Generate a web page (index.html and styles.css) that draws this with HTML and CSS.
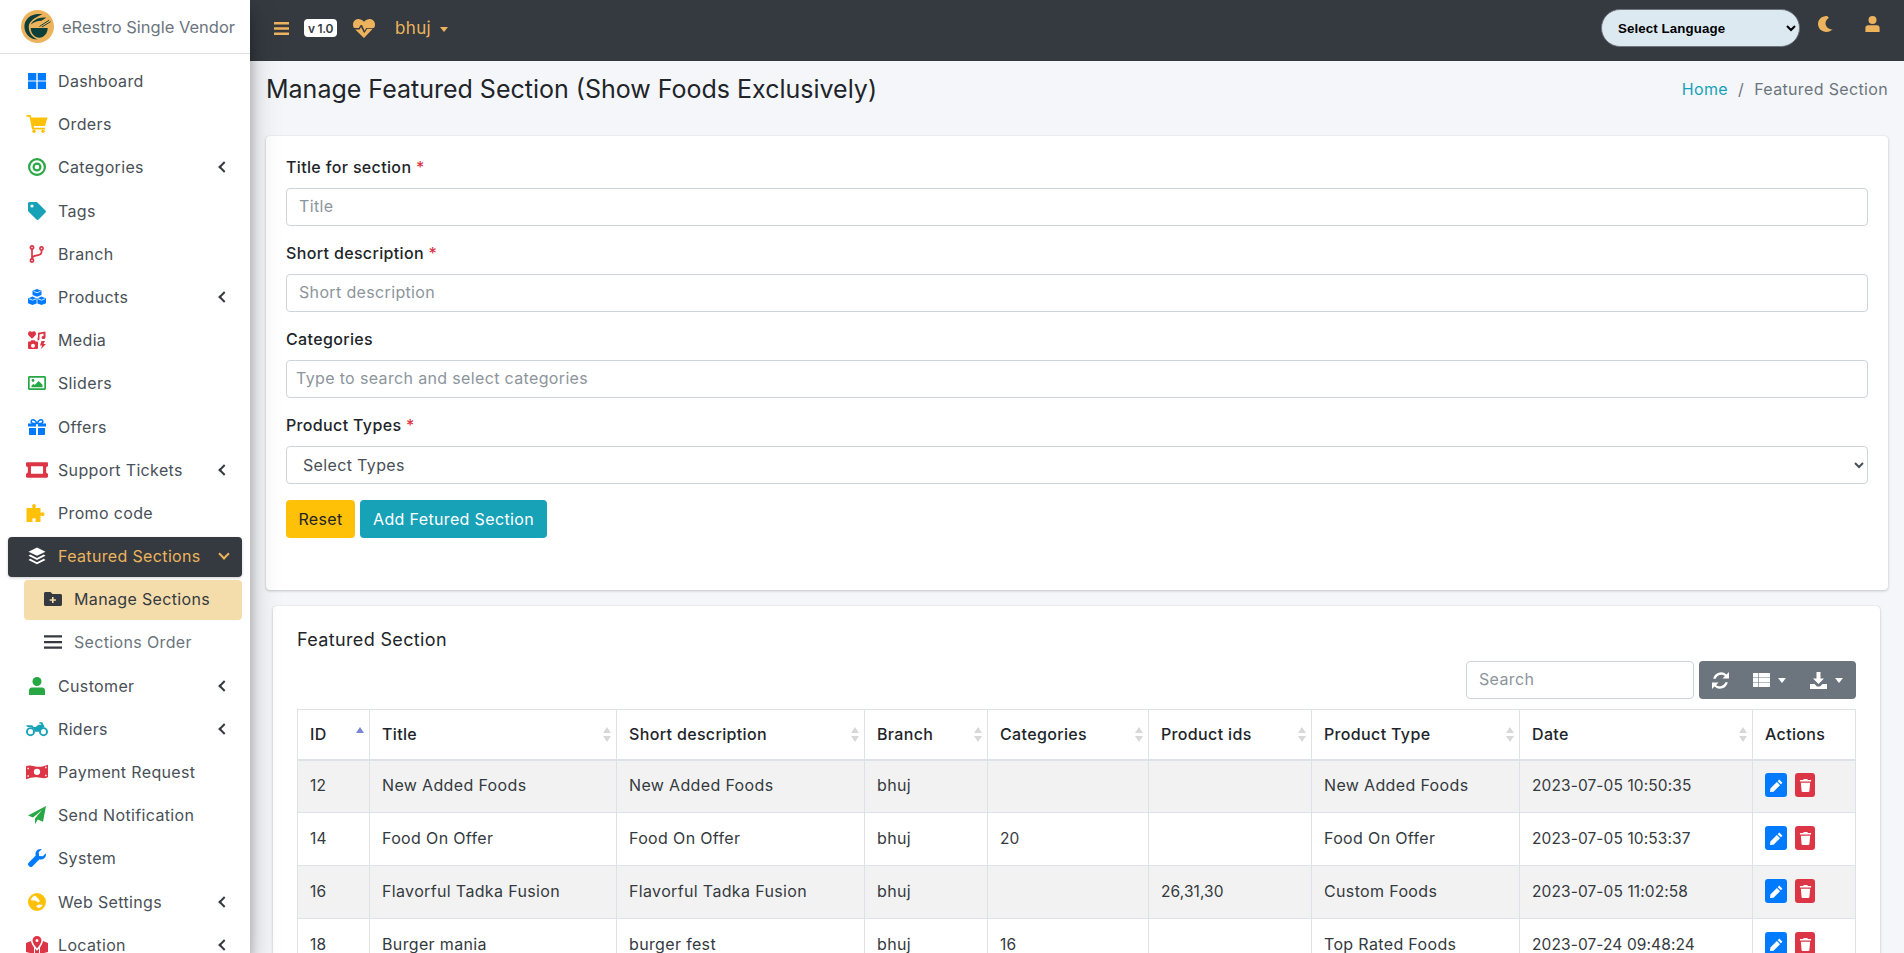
FILE: index.html
```html
<!DOCTYPE html>
<html>
<head>
  <meta charset="utf-8">
  <title>Manage Featured Section</title>
  <link rel="stylesheet" href="styles.css">
</head>
<body>
  <div class="wrapper">
    <aside class="sidebar">
      <div class="brand">
        <svg class="brand-logo" viewBox="0 0 34 34">
          <circle cx="17" cy="17" r="17" fill="#edb35c"/>
          <path d="M22 4.500C12 2.500 3.500 8.500 3.500 17c0 8 6.500 13.500 13.500 13.500C11.500 28 8 23 8 17.500 8 12 14 8 22 4.500z" fill="#0d3f3a"/>
          <path d="M10 18.500h17.500c0 5.500-4 10-8.700 10S10 24 10 18.500z" fill="#0d3f3a"/>
          <path d="M10 15c3-5 9-8 16-7l-5 3c-4 0-8 1.500-11 4z" fill="#0d3f3a"/>
          <path d="M19 17l10-6.500M21.500 17.500l9-5.500" stroke="#0d3f3a" stroke-width="1" fill="none"/>
        </svg>
        <span class="brand-text">eRestro Single Vendor</span>
      </div>
      <nav class="menu">
        <a class="item"><svg class="ico c-blue" viewBox="0 0 18 16"><path d="M0 0h8.300v7.400H0zM9.700 0H18v7.400H9.700zM0 8.600h8.300V16H0zM9.700 8.600H18V16H9.700z"/></svg><span>Dashboard</span></a>
        <a class="item"><svg class="ico wide c-yellow" viewBox="0 0 21 18"><path d="M0 0h4.200l.6 2.500H21l-2.500 8.500H7.200l.4 1.800h10.900v1.700H5.600L3 1.800H0z"/><circle cx="7.500" cy="16.300" r="1.700"/><circle cx="16.500" cy="16.300" r="1.700"/></svg><span>Orders</span></a>
        <a class="item"><svg class="ico c-green" viewBox="0 0 18 18"><path fill-rule="evenodd" d="M9 0a9 9 0 1 1 0 18A9 9 0 0 1 9 0zm0 2.200a6.800 6.800 0 1 0 0 13.600A6.800 6.800 0 0 0 9 2.200zM9 4.500a4.500 4.500 0 1 1 0 9 4.500 4.500 0 0 1 0-9zm0 2.200a2.300 2.300 0 1 0 0 4.600 2.300 2.300 0 0 0 0-4.600z"/></svg><span>Categories</span><i class="chev"></i></a>
        <a class="item"><svg class="ico c-teal" viewBox="0 0 18 18"><path fill-rule="evenodd" d="M0 1.500C0 .7.700 0 1.500 0h6.900c.4 0 .8.200 1 .4l8.100 8.100c.6.600.6 1.500 0 2.100l-6.900 6.900c-.6.600-1.500.6-2.100 0L.4 9.400C.2 9.200 0 8.800 0 8.400zm4 .9a1.600 1.600 0 1 0 0 3.200 1.600 1.600 0 0 0 0-3.200z"/></svg><span>Tags</span></a>
        <a class="item"><svg class="ico c-red" viewBox="0 0 18 18"><g fill="none" stroke="currentColor" stroke-width="1.700"><circle cx="4" cy="2.500" r="1.600"/><circle cx="4" cy="15.500" r="1.600"/><circle cx="13.500" cy="3.500" r="1.600"/><path d="M4 4v10M13.500 5v2c0 2-2 3-4 3.300-2.500.4-5.500.5-5.500 3.700"/></g></svg><span>Branch</span></a>
        <a class="item"><svg class="ico c-blue" viewBox="0 0 18 16"><path d="M9 0l4.500 1.800V6L9 7.800 4.500 6V1.800zM4.500 7.600L9 9.400v4.800L4.500 16 0 14.200V9.400zM13.500 7.600L18 9.400v4.800L13.500 16 9 14.200V9.400z"/><path d="M5.500 2.300L9 3.700l3.500-1.400M1 9.800l3.500 1.400L8 9.800M10 9.800l3.500 1.400L17 9.800M9 9.400v4.800" fill="none" stroke="#fff" stroke-width=".8"/></svg><span>Products</span><i class="chev"></i></a>
        <a class="item"><svg class="ico c-red" viewBox="0 0 18 18"><path d="M4 7.800L.7 4.400C-.3 3.400-.2 1.700.9.800c1-.8 2.300-.5 3.100.3.800-.8 2.100-1.100 3.100-.3 1.100.9 1.200 2.600.2 3.600zM17.500.5v6c0 .9-.9 1.500-2 1.500s-2-.6-2-1.500.9-1.500 2-1.500V2.500l-4 1v4.500c0 .9-.9 1.500-2 1.500 0 0 .1-2.700.1-3 .3 0 .4 0 .4 0V1.800zM0 11.500c0-.6.500-1 1-1h1.500l.7-1.200h3.600l.7 1.200H9c.6 0 1 .4 1 1V17c0 .5-.4 1-1 1H1c-.5 0-1-.5-1-1zm5 1.200a2 2 0 1 0 0 4 2 2 0 0 0 0-4zM13.500 10h3.500l-1.500 3H18l-5 5 1-3.500h-2z"/></svg><span>Media</span></a>
        <a class="item"><svg class="ico c-green" viewBox="0 0 18 14"><path fill-rule="evenodd" d="M1.500 0h15c.8 0 1.500.7 1.500 1.500v11c0 .8-.7 1.500-1.500 1.500h-15C.7 14 0 13.300 0 12.500v-11C0 .7.700 0 1.500 0zm.2 1.700v10.600h14.600V1.700z"/><circle cx="5" cy="4.500" r="1.400"/><path d="M3.500 11.200V9.800l2-2 1.200 1.200 4-4 3.800 3.800v2.400z"/></svg><span>Sliders</span></a>
        <a class="item"><svg class="ico c-blue" viewBox="0 0 18 16"><path d="M1 9h7v7H2c-.6 0-1-.4-1-1zM10 9h7v6c0 .6-.4 1-1 1h-6zM0 4.500h8v3H0zM10 4.500h8v3h-8z"/><path fill="none" stroke="currentColor" stroke-width="1.500" d="M9 4.500C7.500 1.500 6 .8 5 .8 3.800.8 3.200 1.700 3.200 2.600s.8 1.900 2 1.900H9zm0 0C10.500 1.500 12 .8 13 .8c1.200 0 1.800.9 1.800 1.800s-.8 1.900-2 1.900H9z"/></svg><span>Offers</span></a>
        <a class="item"><svg class="ico wide c-red" viewBox="0 0 20 14"><path fill-rule="evenodd" d="M0 1c0-.5.500-1 1-1h18c.5 0 1 .5 1 1v2.600c-1 0-1.700.7-1.700 1.700v3.400c0 1 .7 1.700 1.700 1.700V13c0 .5-.5 1-1 1H1c-.5 0-1-.5-1-1v-2.600c1 0 1.700-.7 1.700-1.700V5.300c0-1-.7-1.700-1.700-1.700zm4.500 2.600v6.800h11V3.600z"/></svg><span>Support Tickets</span><i class="chev"></i></a>
        <a class="item"><svg class="ico wide c-yellow" viewBox="0 0 21 18"><path d="M0 4h5.500c.8 0 .8-.5.300-1.200C5.200 1.800 6 0 7.500 0S9.800 1.800 9.200 2.800C8.700 3.500 8.700 4 9.500 4H14v4.200c0 .8.500.8 1.200.3 1-.6 2.800.2 2.800 1.700s-1.800 2.300-2.800 1.700c-.7-.5-1.200-.5-1.200.3V18H9.300c-.8 0-.8-.5-.3-1.200.6-1 .1-2.800-1.500-2.800S5.400 15.800 6 16.800c.5.700.5 1.200-.3 1.200H0z"/></svg><span>Promo code</span></a>
        <a class="item active"><svg class="ico c-white" viewBox="0 0 19 18"><path d="M9.500 0l9 4.400-9 4.400-9-4.400z"/><path d="M2.400 7.500L.5 8.700l9 4.400 9-4.400-1.900-1.200-7.100 3.500zM2.400 12l-1.900 1.200 9 4.400 9-4.400-1.900-1.200-7.100 3.500z"/></svg><span>Featured Sections</span><i class="chev down"></i></a>
        <a class="subitem current"><svg class="ico c-dark" viewBox="0 0 18 14"><path fill-rule="evenodd" d="M0 1.500C0 .7.700 0 1.500 0h5L8.500 2h8c.8 0 1.500.7 1.500 1.500v9c0 .8-.7 1.500-1.500 1.500h-15C.7 14 0 13.300 0 12.500zM8 5v2.300H5.700v1.500H8v2.300h1.600V8.800h2.300V7.300H9.600V5z"/></svg><span>Manage Sections</span></a>
        <a class="subitem"><svg class="ico c-dark" viewBox="0 0 16 14"><path d="M0 1h16v2H0zM0 6h16v2H0zM0 11h16v2H0z"/></svg><span>Sections Order</span></a>
        <a class="item"><svg class="ico c-green" viewBox="0 0 16 18"><circle cx="8" cy="4.500" r="4.500"/><path d="M3 10.500h10c1.700 0 3 1.300 3 3V18H0v-4.500c0-1.700 1.300-3 3-3z"/></svg><span>Customer</span><i class="chev"></i></a>
        <a class="item"><svg class="ico wide c-teal" viewBox="0 0 23 15"><path d="M4 5.500h6l3-2.500h3.500l1.500 2.500-4 5H9.500C9 8 7 5.500 4 5.500zM14 .5h3l2.500 5-1.500.8L15.500 2H14zM0 3.500h6.500L8 5.500H1.500z"/><path fill-rule="evenodd" d="M4.700 5.600a4.700 4.700 0 1 1 0 9.400 4.700 4.700 0 0 1 0-9.400zm0 2a2.700 2.700 0 1 0 0 5.400 2.700 2.700 0 0 0 0-5.400zM18.300 5.600a4.700 4.700 0 1 1 0 9.400 4.700 4.700 0 0 1 0-9.400zm0 2a2.700 2.700 0 1 0 0 5.400 2.700 2.700 0 0 0 0-5.400z"/></svg><span>Riders</span><i class="chev"></i></a>
        <a class="item"><svg class="ico wide c-red" viewBox="0 0 23 16"><path fill-rule="evenodd" d="M0 2c4-2 8 0 11.500.5S19 2 23 .5v13c-4 2-8 .5-11.500 0S4 14 0 15.500zm11.500 2.500a3.300 3.300 0 1 0 0 6.600 3.300 3.300 0 0 0 0-6.600zM1.500 3.500v1.500H3V3.500zM20 2.500V4h1.500V2.500zM1.500 11.500V13H3v-1.500zM20 11v1.500h1.500V11z"/></svg><span>Payment Request</span></a>
        <a class="item"><svg class="ico c-green" viewBox="0 0 18 18"><path d="M18 0L15 15.800l-5.200-2.300L7 18v-5.500L14 4 5 11.500 0 9.500z"/></svg><span>Send Notification</span></a>
        <a class="item"><svg class="ico c-blue" viewBox="0 0 18 18"><path d="M17.800 4.300c.5 2-.2 4-1.800 5.200-1.300 1-3 1.300-4.500.8L4.300 17.400c-.8.800-2.100.8-2.900 0l-.8-.8c-.8-.8-.8-2.100 0-2.900l7.100-7.200c-.5-1.500-.2-3.200.8-4.500C9.700.4 11.700-.3 13.700.2l-3 3 .4 3.700 3.700.4z"/></svg><span>System</span></a>
        <a class="item"><svg class="ico c-yellow" viewBox="0 0 18 18"><path fill-rule="evenodd" d="M9 0a9 9 0 1 1 0 18A9 9 0 0 1 9 0zM7 2.500C5 3.200 3.300 5 2.800 7c1.500 1 3.200.2 4.700.7s2.500 2 3.500 1.500.5-2.200-.5-3.200S8 3.500 7 2.500zM12 11.500c-1 0-3 .5-3.500 1.500s1.500 2 2.500 2c1.500-.3 3-1.500 3.700-3-.7-.3-1.700-.5-2.700-.5z"/></svg><span>Web Settings</span><i class="chev"></i></a>
        <a class="item"><svg class="ico wide c-red" viewBox="0 0 22 18"><path fill-rule="evenodd" d="M11 0c2.500 0 4.500 2 4.500 4.400 0 2.200-2.500 5.600-4.500 8-2-2.400-4.500-5.800-4.500-8C6.500 2 8.500 0 11 0zm0 3a1.500 1.500 0 1 0 0 3 1.500 1.500 0 0 0 0-3z"/><path d="M0 7l5-2c.2 2 1.700 4.500 3 6.500V18l-8-2zM22 7l-5-2c-.2 2-1.700 4.500-3 6.500V18l8-2zM9 12.500c.6.800 1.300 1.600 2 2.300.7-.7 1.400-1.500 2-2.300V18H9z"/></svg><span>Location</span><i class="chev"></i></a>
      </nav>
    </aside>

    <div class="main">
      <header class="topbar">
        <svg class="bar-btn" viewBox="0 0 15 13"><path d="M0 0h15v2.500H0zM0 5.250h15v2.500H0zM0 10.500h15V13H0z"/></svg>
        <span class="version">v 1.0</span>
        <svg class="heart" viewBox="0 0 22 19"><path fill-rule="evenodd" d="M11 19L2.200 10.500h4.500L8 8l2.800 5.500.9.200 2.400-4h5.700zM1 9C-.7 6.500-.2 3 2 1.300 4.500-.7 8-.3 11 2.800c3-3.100 6.500-3.500 9-1.500 2.200 1.700 2.700 5.200 1 7.700h-7.700l-1.700 2.800L9 6.100 7.700 6 5.800 9z"/></svg>
        <a class="branch-name">bhuj<i class="caret"></i></a>
        <div class="top-right">
          <select class="lang"><option>Select Language</option></select>
          <svg class="top-ico" viewBox="0 0 16 17"><path d="M9 0C4 0 0 3.800 0 8.500S4 17 9 17c2.700 0 5-1 6.700-2.800-.3 0-.6.100-.9.100-3.800 0-6.800-3-6.800-6.500 0-2.500 1.400-4.600 3.500-5.800C10.800.7 10 0 9 0z"/></svg>
          <svg class="top-ico" viewBox="0 0 16 18"><circle cx="8" cy="4.500" r="4.500"/><path d="M3 10.500h10c1.700 0 3 1.300 3 3V18H0v-4.500c0-1.700 1.300-3 3-3z"/></svg>
        </div>
      </header>

      <div class="content">
        <div class="content-head">
          <h1>Manage Featured Section (Show Foods Exclusively)</h1>
          <div class="crumbs"><a>Home</a><b>/</b><span>Featured Section</span></div>
        </div>

        <form class="card form-card">
          <label class="lbl">Title for section <em>*</em></label>
          <input class="field" placeholder="Title">
          <label class="lbl">Short description <em>*</em></label>
          <input class="field" placeholder="Short description">
          <label class="lbl">Categories</label>
          <input class="field tight" placeholder="Type to search and select categories">
          <label class="lbl">Product Types <em>*</em></label>
          <select class="field pick"><option>Select Types</option></select>
          <div class="form-btns">
            <button type="button" class="btn btn-reset">Reset</button>
            <button type="button" class="btn btn-add">Add Fetured Section</button>
          </div>
        </form>

        <div class="card table-card">
          <h2>Featured Section</h2>
          <div class="toolbar">
            <input class="search" placeholder="Search">
            <div class="tool-group">
              <svg class="tool" viewBox="0 0 17 17"><path d="M14.500 2.500A8 8 0 0 0 1.200 6.800h2.500a5.700 5.700 0 0 1 9.200-2.700L10.500 6.500H17V0zM2.500 14.500A8 8 0 0 0 15.800 10.200h-2.500a5.700 5.700 0 0 1-9.200 2.700l2.400-2.400H0V17z"/></svg>
              <span class="tool-menu"><svg class="tool list" viewBox="0 0 17 14"><path d="M0 0h5.200v4.300H0zM5.800 0H17v4.300H5.800zM0 4.850h5.200v4.300H0zM5.800 4.850H17v4.300H5.800zM0 9.700h5.200V14H0zM5.800 9.700H17V14H5.800z"/></svg><i class="caret"></i></span>
              <span class="tool-menu"><svg class="tool" viewBox="0 0 17 17"><path d="M6.500 0h4v6.500H14L8.500 12 3 6.500h3.500zM0 12h4.500L7 14.500h3L12.500 12H17v5H0z"/></svg><i class="caret"></i></span>
            </div>
          </div>
          <table class="grid">
            <thead>
              <tr>
                <th class="w-id">ID<i class="sort asc"></i></th>
                <th class="w-title">Title<i class="sort"></i></th>
                <th class="w-short">Short description<i class="sort"></i></th>
                <th class="w-branch">Branch<i class="sort"></i></th>
                <th class="w-cat">Categories<i class="sort"></i></th>
                <th class="w-ids">Product ids<i class="sort"></i></th>
                <th class="w-type">Product Type<i class="sort"></i></th>
                <th class="w-date">Date<i class="sort"></i></th>
                <th>Actions</th>
              </tr>
            </thead>
            <tbody>
              <tr class="odd">
                <td class="num">12</td><td>New Added Foods</td><td>New Added Foods</td><td>bhuj</td><td></td><td></td><td>New Added Foods</td><td class="num">2023-07-05 10:50:35</td>
                <td class="acts"><a class="act edit"><svg viewBox="0 0 14 14"><path d="M10 .6l3.400 3.400-1.700 1.700-3.400-3.400zM7.400 3.200l3.400 3.400-7 7L0 14l.4-3.800z"/></svg></a><a class="act del"><svg viewBox="0 0 12 14"><path d="M4 0h4l.5 1H12v1.800H0V1h3.500zM1 4h10l-.8 9c0 .6-.5 1-1 1H2.800c-.5 0-1-.4-1-1z"/></svg></a></td>
              </tr>
              <tr>
                <td class="num">14</td><td>Food On Offer</td><td>Food On Offer</td><td>bhuj</td><td class="num">20</td><td></td><td>Food On Offer</td><td class="num">2023-07-05 10:53:37</td>
                <td class="acts"><a class="act edit"><svg viewBox="0 0 14 14"><path d="M10 .6l3.400 3.400-1.700 1.700-3.400-3.400zM7.400 3.200l3.400 3.400-7 7L0 14l.4-3.800z"/></svg></a><a class="act del"><svg viewBox="0 0 12 14"><path d="M4 0h4l.5 1H12v1.800H0V1h3.500zM1 4h10l-.8 9c0 .6-.5 1-1 1H2.800c-.5 0-1-.4-1-1z"/></svg></a></td>
              </tr>
              <tr class="odd">
                <td class="num">16</td><td>Flavorful Tadka Fusion</td><td>Flavorful Tadka Fusion</td><td>bhuj</td><td></td><td class="num">26,31,30</td><td>Custom Foods</td><td class="num">2023-07-05 11:02:58</td>
                <td class="acts"><a class="act edit"><svg viewBox="0 0 14 14"><path d="M10 .6l3.400 3.400-1.700 1.700-3.400-3.400zM7.400 3.200l3.400 3.400-7 7L0 14l.4-3.800z"/></svg></a><a class="act del"><svg viewBox="0 0 12 14"><path d="M4 0h4l.5 1H12v1.800H0V1h3.500zM1 4h10l-.8 9c0 .6-.5 1-1 1H2.800c-.5 0-1-.4-1-1z"/></svg></a></td>
              </tr>
              <tr>
                <td class="num">18</td><td>Burger mania</td><td>burger fest</td><td>bhuj</td><td class="num">16</td><td></td><td>Top Rated Foods</td><td class="num">2023-07-24 09:48:24</td>
                <td class="acts"><a class="act edit"><svg viewBox="0 0 14 14"><path d="M10 .6l3.400 3.400-1.700 1.700-3.400-3.400zM7.400 3.200l3.400 3.400-7 7L0 14l.4-3.800z"/></svg></a><a class="act del"><svg viewBox="0 0 12 14"><path d="M4 0h4l.5 1H12v1.800H0V1h3.500zM1 4h10l-.8 9c0 .6-.5 1-1 1H2.800c-.5 0-1-.4-1-1z"/></svg></a></td>
              </tr>
            </tbody>
          </table>
        </div>
      </div>
    </div>
  </div>
</body>
</html>
```

FILE: styles.css
```css
html, body {
  height: 100%;
  margin: 0;
  overflow: hidden;
}
body {
  font-family: "Inter", "Liberation Sans", sans-serif;
  font-size: 16px;
  letter-spacing: .35px;
  color: #343a40;
  background: #f4f6f9;
}
input, select, button {
  letter-spacing: inherit;
}
.wrapper {
  display: flex;
  height: 953px;
  overflow: hidden;
}

/* sidebar */
.sidebar {
  width: 250px;
  flex: none;
  background: #fff;
  box-shadow: 0 14px 28px rgba(0,0,0,.25), 0 10px 10px rgba(0,0,0,.22);
  position: relative;
  z-index: 2;
  overflow: hidden;
}
.brand {
  height: 53px;
  border-bottom: 1px solid #dee2e6;
  display: flex;
  align-items: center;
  padding-left: 21px;
  gap: 8px;
  color: #6c757d;
}
.brand-logo {
  width: 33px;
  height: 33px;
}
.brand-text {
  font-size: 16.500px;
  letter-spacing: 0;
}
.menu {
  padding: 8px 8px 0;
}
.item, .subitem {
  display: flex;
  align-items: center;
  box-sizing: border-box;
  height: 40px;
  margin-bottom: 3.200px;
  border-radius: 4px;
  padding: 0 0 2px 20px;
  position: relative;
  color: #495057;
}
.ico {
  width: 18px;
  height: 18px;
  fill: currentColor;
  flex: none;
  margin-right: 12px;
}
.ico.wide {
  width: 22px;
  margin-left: -2px;
  margin-right: 10px;
}
.c-blue { color: #007bff; }
.c-yellow { color: #ffc107; }
.c-green { color: #28a745; }
.c-teal { color: #17a2b8; }
.c-red { color: #dc3545; }
.c-white { color: #fff; }
.c-dark { color: #343a40; }
.chev {
  position: absolute;
  right: 14px;
  top: 15px;
  width: 6px;
  height: 6px;
  border-left: 2.500px solid #343a40;
  border-bottom: 2.500px solid #343a40;
  transform: rotate(45deg);
}
.chev.down {
  border-color: #edb35c;
  transform: rotate(-45deg);
  top: 13px;
}
.item.active {
  background: #343a40;
  color: #edb35c;
  box-shadow: 0 1px 3px rgba(0,0,0,.2);
}
.subitem {
  margin-left: 16px;
  color: #6c757d;
}
.subitem.current {
  background: #f5dcab;
  color: #343a40;
}

/* top bar */
.main {
  flex: 1;
  min-width: 0;
}
.topbar {
  height: 61px;
  box-sizing: border-box;
  padding: 0 0 5px 24px;
  background: #343a40;
  display: flex;
  align-items: center;
  color: #edb35c;
}
.bar-btn {
  width: 15px;
  height: 13px;
  fill: #edb35c;
}
.version {
  display: flex;
  align-items: center;
  justify-content: center;
  width: 33px;
  height: 18px;
  background: #fff;
  color: #343a40;
  font-size: 12px;
  font-weight: 600;
  letter-spacing: -.3px;
  border-radius: 4px;
  margin-left: 15px;
}
.heart {
  width: 22px;
  height: 19px;
  fill: #edb35c;
  margin-left: 16px;
}
.branch-name {
  margin-left: 20px;
  font-size: 17px;
}
.caret {
  display: inline-block;
  margin-left: 9px;
  vertical-align: 2px;
  border-top: 5px solid currentColor;
  border-left: 4px solid transparent;
  border-right: 4px solid transparent;
}
.top-right {
  margin-left: auto;
  display: flex;
  align-items: center;
  padding-right: 24px;
}
.lang {
  width: 199px;
  height: 38px;
  border-radius: 19px;
  border: 1px solid #6c757d;
  background: #dce9f1;
  font-family: "Liberation Sans", sans-serif;
  font-size: 13.300px;
  font-weight: 700;
  letter-spacing: .1px;
  padding-left: 12px;
  color: #000;
}
.top-ico {
  height: 16px;
  width: 15px;
  fill: #edb35c;
  margin-bottom: 8px;
}
.lang + .top-ico {
  margin-left: 18px;
}
.top-ico + .top-ico {
  margin-left: 32px;
}

/* content */
.content {
  padding: 0 16px;
}
.content-head {
  display: flex;
  align-items: center;
  justify-content: space-between;
  height: 75px;
  padding: 0 0 19px;
  box-sizing: border-box;
}
h1 {
  margin: 0;
  font-size: 25px;
  font-weight: 400;
  letter-spacing: 0;
  color: #212529;
}
.crumbs {
  color: #6c757d;
}
.crumbs a {
  color: #17a2b8;
}
.crumbs b {
  font-weight: 400;
  margin: 0 10px;
}
.card {
  background: #fff;
  border-radius: 4px;
  box-shadow: 0 0 1px rgba(0,0,0,.125), 0 1px 3px rgba(0,0,0,.2);
}
.form-card {
  height: 454px;
  box-sizing: border-box;
  padding: 20px 20px 0;
  margin-bottom: 16px;
}
.lbl {
  display: block;
  font-weight: 500;
  color: #212529;
  height: 24px;
  line-height: 22px;
  margin-bottom: 8px;
}
.lbl em {
  color: #dc3545;
  font-style: normal;
}
.field {
  display: block;
  width: 100%;
  height: 38px;
  box-sizing: border-box;
  border: 1px solid #ced4da;
  border-radius: 4px;
  background: #fff;
  font: inherit;
  color: #495057;
  padding: 0 12px 2px;
  margin-bottom: 16px;
}
.field.tight {
  padding: 0 9px 2px;
}
.field.pick {
  padding: 0 12px;
}
.field::placeholder, .search::placeholder {
  color: #8d959c;
}
.form-btns {
  display: flex;
  gap: 5px;
  margin-top: 16px;
}
.btn {
  height: 38px;
  border: 0;
  border-radius: 4px;
  font: inherit;
  letter-spacing: inherit;
}
.btn-reset {
  width: 69px;
  padding: 0;
  background: #ffc107;
  color: #212529;
}
.btn-add {
  width: 187px;
  padding: 0;
  background: #17a2b8;
  color: #fff;
}
.table-card {
  margin: 0 8px 0 7px;
  padding: 22px 24px 0;
  height: 400px;
}
h2 {
  margin: 0;
  font-size: 18px;
  font-weight: 400;
  color: #212529;
  line-height: 24px;
}
.toolbar {
  display: flex;
  justify-content: flex-end;
  gap: 5px;
  margin-top: 9px;
  margin-bottom: 10px;
}
.search {
  width: 228px;
  height: 38px;
  box-sizing: border-box;
  border: 1px solid #ced4da;
  border-radius: 4px;
  font: inherit;
  padding: 0 12px 2px;
}
.tool-group {
  display: flex;
  align-items: center;
  gap: 24px;
  width: 157px;
  height: 38px;
  box-sizing: border-box;
  padding-left: 13px;
  background: #6c757d;
  border-radius: 4px;
  color: #fff;
}
.tool {
  width: 17px;
  height: 17px;
  fill: #fff;
}
.tool.list {
  height: 14px;
}
.tool-menu {
  display: flex;
  align-items: center;
}
.tool-menu .caret {
  margin-left: 8px;
  vertical-align: 0;
}

/* table */
.grid {
  width: 100%;
  table-layout: fixed;
  border-collapse: collapse;
  color: #343a40;
}
.grid th, .grid td {
  border: 1px solid #dee2e6;
  text-align: left;
  padding: 0 12px;
  font-weight: 400;
  white-space: nowrap;
  overflow: hidden;
}
.grid th {
  box-sizing: border-box;
  height: 50px;
  border-bottom-width: 2px;
  font-weight: 500;
  color: #212529;
  position: relative;
}
.grid td {
  box-sizing: border-box;
  height: 53px;
  padding-bottom: 2px;
}
.grid td.num {
  font-size: 15.500px;
  letter-spacing: .1px;
}
.grid .odd td {
  background: #f2f2f2;
}
.w-id { width: 72px; }
.w-title { width: 247px; }
.w-short { width: 248px; }
.w-branch { width: 123px; }
.w-cat { width: 161px; }
.w-ids { width: 163px; }
.w-type { width: 208px; }
.w-date { width: 233px; }
.sort {
  position: absolute;
  right: 5px;
  top: 17px;
  width: 8px;
  height: 15px;
}
.sort::before, .sort::after {
  content: "";
  position: absolute;
  left: 0;
  border-left: 4px solid transparent;
  border-right: 4px solid transparent;
}
.sort::before {
  top: 0;
  border-bottom: 6.500px solid #d8d8d8;
}
.sort::after {
  bottom: 0;
  border-top: 6.500px solid #d8d8d8;
}
.sort.asc::after {
  display: none;
}
.sort.asc::before {
  border-bottom-color: #7a85d8;
}
.acts {
  font-size: 0;
}
.act {
  display: inline-flex;
  align-items: center;
  justify-content: center;
  width: 22px;
  height: 24px;
  border-radius: 3px;
  vertical-align: middle;
}
.act svg {
  width: 13px;
  height: 13px;
  fill: #fff;
}
.edit {
  background: #007bff;
}
.del {
  width: 20px;
  background: #dc3545;
  margin-left: 8px;
}
```
